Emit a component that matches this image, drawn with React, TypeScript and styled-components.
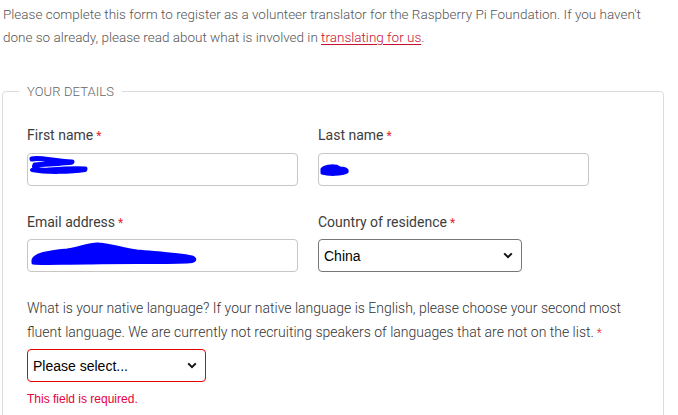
import React from "react";
import styled, { createGlobalStyle } from "styled-components";

const Global = createGlobalStyle`
  html, body { margin: 0; padding: 0; background: #fff; }
  body { font-family: Roboto, "Noto Sans", Arial, sans-serif; }
  * { box-sizing: border-box; }
`;

const Page = styled.div`
  width: 678px;
  height: 415px;
  overflow: hidden;
  padding: 0 0 0 2px;
`;

const Intro = styled.p`
  margin: 0 0 35px 1px;
  padding-top: 3px;
  width: 662px;
  font-size: 13.5px;
  font-weight: 300;
  line-height: 23px;
  color: #555;
`;

const Link = styled.a`
  color: #c8102e;
  text-decoration: underline;
  text-underline-offset: 2px;
`;

const Fieldset = styled.fieldset`
  margin: 0;
  width: 662px;
  border: 1px solid #dcdcdc;
  border-radius: 4px;
  padding: 26px 24px 20px 24px;
`;

const Legend = styled.legend`
  margin-left: -8px;
  padding: 0 8px;
  font-size: 13px;
  font-weight: 300;
  color: #666;
  text-transform: uppercase;
  letter-spacing: 0.1px;
`;

const Grid = styled.div`
  display: grid;
  grid-template-columns: 271px 271px;
  column-gap: 20px;
  row-gap: 26px;
`;

const Field = styled.div<{ $gap?: number }>`
  display: flex;
  flex-direction: column;
  gap: ${(p) => p.$gap ?? 7}px;
`;

const Label = styled.label`
  font-size: 14px;
  line-height: 20px;
  color: #3d3d3d;
`;

const Req = styled.span`
  color: #e8202e;
  font-size: 12px;
  margin-left: 3px;
`;

const InputWrap = styled.div`
  position: relative;
  height: 33px;
`;

const TextInput = styled.input`
  width: 100%;
  height: 33px;
  border: 1px solid #c6c6c6;
  border-radius: 4px;
  background: #fff;
  padding: 0 8px;
  font-family: "Liberation Sans", Arial, sans-serif;
  font-size: 14px;
  color: #222;
  outline: none;
`;

const Scribble = styled.svg`
  position: absolute;
  left: 0;
  top: 0;
  pointer-events: none;
`;

const SelectBox = styled.div<{ $w: number; $error?: boolean }>`
  position: relative;
  width: ${(p) => p.$w}px;
  height: 33px;
  border: 1px solid ${(p) => (p.$error ? "#e60000" : "#767676")};
  border-radius: 4px;
  background: #fff;
  display: flex;
  align-items: center;
  padding: 0 8px 0 5px;
  justify-content: space-between;
  font-family: "Liberation Sans", Arial, sans-serif;
  font-size: 14px;
  color: #000;
`;

const Chevron = () => (
  <svg width="10" height="7" viewBox="0 0 10 7">
    <path d="M1.2 1.4 L5 5.2 L8.8 1.4" fill="none" stroke="#111" strokeWidth="2" />
  </svg>
);

const Question = styled.div`
  margin-top: 24px;
  width: 600px;
  font-size: 14px;
  font-weight: 300;
  line-height: 24px;
  color: #333;
`;

const QReq = styled.span`
  color: #e8202e;
  font-size: 12px;
  margin-left: 3px;
`;

const LangSelect = styled.div`
  margin-top: 4px;
`;

const ErrorText = styled.div`
  margin-top: 10px;
  font-family: "Liberation Sans", Arial, sans-serif;
  font-size: 12px;
  color: #e8003d;
`;

const BLUE = "#0000ff";

export default function App() {
  return (
    <Page>
      <Global />
      <Intro>
        Please complete this form to register as a volunteer translator for the Raspberry Pi
        Foundation. If you haven't done so already, please read about what is involved in{" "}
        <Link href="#">translating for us</Link>.
      </Intro>
      <Fieldset>
        <Legend>Your details</Legend>
        <Grid>
          <Field>
            <Label>
              First name<Req>*</Req>
            </Label>
            <InputWrap>
              <TextInput defaultValue="" />
              <Scribble width="80" height="33" viewBox="0 0 80 33">
                <path
                  d="M5 6 C12 4, 25 8, 45 9 C40 10, 20 11, 8 12 C6 15, 10 18, 22 17 C35 16, 50 15, 58 16"
                  fill="none"
                  stroke={BLUE}
                  strokeWidth="5"
                  strokeLinecap="round"
                  strokeLinejoin="round"
                />
                <path d="M5 17 C20 20, 45 19, 58 17" fill="none" stroke={BLUE} strokeWidth="4" strokeLinecap="round" />
              </Scribble>
            </InputWrap>
          </Field>
          <Field>
            <Label>
              Last name<Req>*</Req>
            </Label>
            <InputWrap>
              <TextInput defaultValue="" />
              <Scribble width="40" height="33" viewBox="0 0 40 33">
                <path
                  d="M4 16 C8 12, 18 12, 22 15 C26 15, 30 16, 29 19 C24 22, 10 22, 4 20 Z"
                  fill={BLUE}
                  stroke={BLUE}
                  strokeWidth="3"
                  strokeLinejoin="round"
                />
              </Scribble>
            </InputWrap>
          </Field>
          <Field $gap={6}>
            <Label>
              Email address<Req>*</Req>
            </Label>
            <InputWrap>
              <TextInput defaultValue="" />
              <Scribble width="180" height="33" viewBox="0 0 180 33">
                <path
                  d="M6 21 C8 15, 20 13, 40 11 C55 9, 62 4, 72 5 C85 6, 95 10, 110 12 C130 14, 150 15, 165 18 C170 20, 168 23, 160 23 C130 24, 90 23, 60 24 C35 24, 15 25, 6 24 Z"
                  fill={BLUE}
                  stroke={BLUE}
                  strokeWidth="3"
                  strokeLinejoin="round"
                />
              </Scribble>
            </InputWrap>
          </Field>
          <Field $gap={6}>
            <Label>
              Country of residence<Req>*</Req>
            </Label>
            <SelectBox $w={204}>
              <span>China</span>
              <Chevron />
            </SelectBox>
          </Field>
        </Grid>
        <Question>
          What is your native language? If your native language is English, please choose your
          second most fluent language. We are currently not recruiting speakers of languages that
          are not on the list.<QReq>*</QReq>
        </Question>
        <LangSelect>
          <SelectBox $w={179} $error>
            <span>Please select...</span>
            <Chevron />
          </SelectBox>
        </LangSelect>
        <ErrorText>This field is required.</ErrorText>
      </Fieldset>
    </Page>
  );
}
